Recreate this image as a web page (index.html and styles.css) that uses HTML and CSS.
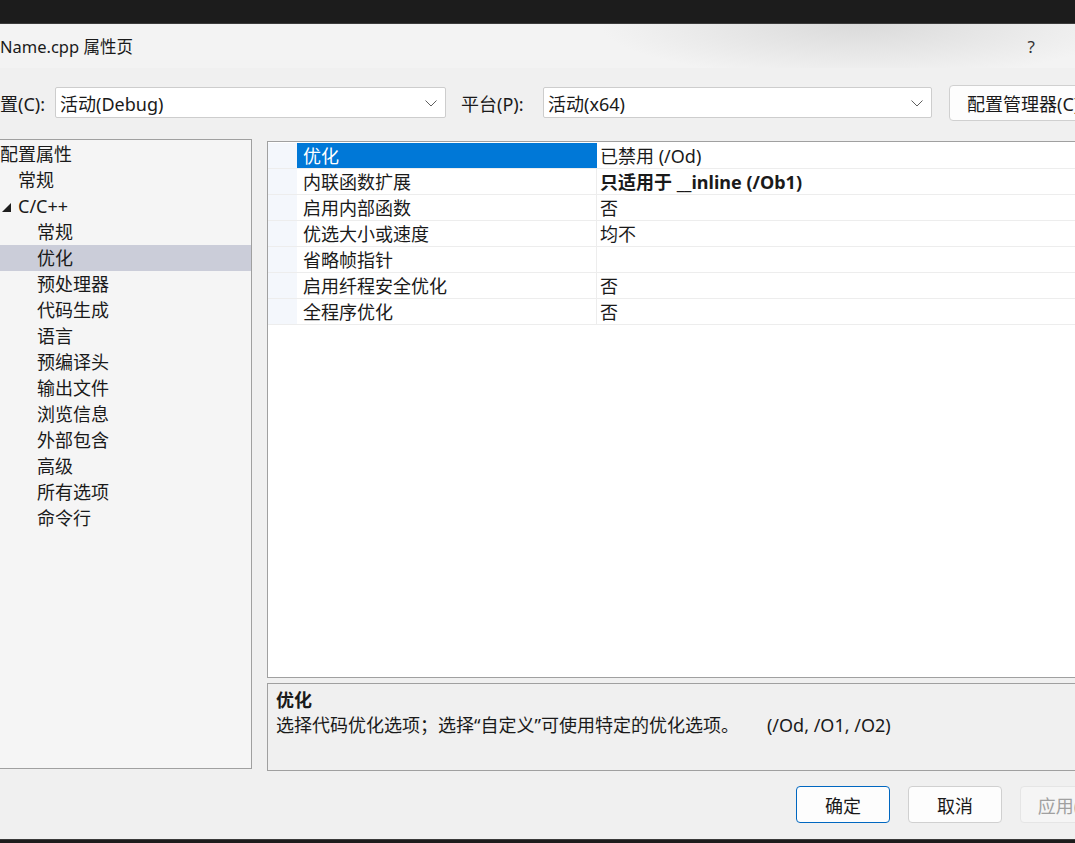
FILE: index.html
```html
<!DOCTYPE html>
<html lang="zh-CN">
<head>
    <meta charset="UTF-8">
    <meta name="viewport" content="width=device-width, initial-scale=1.0">
    <title>Name.cpp 属性页</title>
    <link rel="stylesheet" href="styles.css">
</head>
<body>
    <div class="topbar"></div>
    <div class="titlebar">
        <span class="title">Name.cpp 属性页</span>
        <span class="help">?</span>
    </div>
    <div class="config_row">
        <label class="cfg_label">置(C):</label>
        <div class="combo combo_cfg"><span>活动(Debug)</span>
            <svg class="chev" width="12" height="7" viewBox="0 0 12 7"><polyline points="0.5,0.5 6,6 11.5,0.5" fill="none" stroke="#5f5f5f" stroke-width="1"/></svg>
        </div>
        <label class="plat_label">平台(P):</label>
        <div class="combo combo_plat"><span>活动(x64)</span>
            <svg class="chev" width="12" height="7" viewBox="0 0 12 7"><polyline points="0.5,0.5 6,6 11.5,0.5" fill="none" stroke="#5f5f5f" stroke-width="1"/></svg>
        </div>
        <button class="btn btn_mgr">配置管理器(C)...</button>
    </div>
    <div class="main">
        <div class="tree">
            <div class="node lvl0">配置属性</div>
            <div class="node lvl1">常规</div>
            <div class="node lvl0 open"><svg class="tri" width="9" height="9" viewBox="0 0 9 9"><polygon points="0,9 9,9 9,0" fill="#1e1e1e"/></svg>C/C++</div>
            <div class="node lvl2">常规</div>
            <div class="node lvl2 selected">优化</div>
            <div class="node lvl2">预处理器</div>
            <div class="node lvl2">代码生成</div>
            <div class="node lvl2">语言</div>
            <div class="node lvl2">预编译头</div>
            <div class="node lvl2">输出文件</div>
            <div class="node lvl2">浏览信息</div>
            <div class="node lvl2">外部包含</div>
            <div class="node lvl2">高级</div>
            <div class="node lvl2">所有选项</div>
            <div class="node lvl2">命令行</div>
        </div>
        <div class="right_col">
            <div class="grid">
                <div class="rows">
                    <div class="row"><div class="name active">优化</div><div class="value">已禁用 (/Od)</div></div>
                    <div class="row"><div class="name">内联函数扩展</div><div class="value bold">只适用于 __inline (/Ob1)</div></div>
                    <div class="row"><div class="name">启用内部函数</div><div class="value">否</div></div>
                    <div class="row"><div class="name">优选大小或速度</div><div class="value">均不</div></div>
                    <div class="row"><div class="name">省略帧指针</div><div class="value"></div></div>
                    <div class="row"><div class="name">启用纤程安全优化</div><div class="value">否</div></div>
                    <div class="row"><div class="name">全程序优化</div><div class="value">否</div></div>
                </div>
            </div>
            <div class="desc">
                <div class="desc_title">优化</div>
                <div class="desc_text">选择代码优化选项；选择“自定义”可使用特定的优化选项。<span class="switches">(/Od, /O1, /O2)</span></div>
            </div>
        </div>
    </div>
    <div class="buttons">
        <button class="btn btn_ok">确定</button>
        <button class="btn">取消</button>
        <button class="btn btn_off">应用(A)</button>
    </div>
    <div class="bottombar"></div>
</body>
</html>
```

FILE: styles.css
```css
body {
    margin: 0;
    width: 1075px;
    height: 843px;
    overflow: hidden;
    background-color: #f0f0f0;
    color: #1a1a1a;
    font-family: "Noto Sans", "Noto Sans CJK SC", sans-serif;
    font-size: 18px;
    position: relative;
}
.topbar {
    height: 23px;
    background-color: #1c1c1c;
    border-bottom: 1px solid #3b3b3b;
}
.titlebar {
    height: 44px;
    display: flex;
    align-items: center;
    justify-content: space-between;
    background: radial-gradient(ellipse 260px 55px at 860px 0px, #dadada, rgba(243,243,243,0)), #f3f3f3;
}
.title {
    font-size: 16.5px;
    white-space: nowrap;
}
.help {
    margin-right: 40px;
    color: #333;
    font-size: 17px;
}
.config_row {
    display: flex;
    align-items: center;
    height: 37px;
    margin-top: 16px;
    white-space: nowrap;
}
.config_row > * {
    flex-shrink: 0;
}
.cfg_label {
    width: 55px;
}
.plat_label {
    width: 82px;
    margin-left: 15px;
}
.combo {
    height: 31px;
    border: 1px solid #cdcdcd;
    border-radius: 2px;
    background-color: #fff;
    display: flex;
    align-items: center;
    justify-content: space-between;
    padding-left: 4px;
    padding-right: 8px;
    box-sizing: border-box;
}
.combo_cfg { width: 391px; }
.combo_plat { width: 389px; }
.chev { margin-top: 1px; }
.btn {
    font-family: inherit;
    font-size: 18px;
    color: #1a1a1a;
    background-color: #fdfdfd;
    border: 1px solid #d0d0d0;
    border-radius: 4px;
    height: 37px;
    width: 94px;
    padding: 0;
    white-space: nowrap;
    flex-shrink: 0;
}
.btn_mgr {
    margin-left: 17px;
    width: 170px;
    height: 36px;
    text-align: left;
    padding-left: 17px;
}
.main {
    display: flex;
    margin-top: 18px;
    margin-left: -1px;
}
.tree {
    width: 251px;
    height: 627px;
    border: 1px solid #a0a0a0;
    background-color: #f5f5f5;
    padding-top: 1px;
    flex-shrink: 0;
}
.node {
    height: 26px;
    line-height: 26px;
    white-space: nowrap;
    display: flex;
    align-items: center;
}
.lvl0 { padding-left: 0; }
.lvl1 { padding-left: 18px; }
.lvl2 { padding-left: 37px; }
.open { padding-left: 2px; }
.tri {
    margin-right: 7px;
    margin-top: 2px;
}
.selected {
    background-color: #cbcdd9;
}
.right_col {
    margin-left: 15px;
    display: flex;
    flex-direction: column;
    width: 850px;
    flex-shrink: 0;
}
.grid {
    height: 534px;
    border: 1px solid #a0a0a0;
    border-right: none;
    background-color: #fff;
    margin-top: 2px;
    padding-top: 1px;
}
.rows {
    background: linear-gradient(to right, #f4f7fc 29px, transparent 29px);
}
.row {
    display: flex;
    height: 26px;
    line-height: 26px;
    border-bottom: 1px solid #ededed;
    box-sizing: border-box;
    white-space: nowrap;
}
.name {
    margin-left: 29px;
    width: 293px;
    padding-left: 6px;
    border-right: 1px solid #ededed;
    background-color: #fff;
}
.name.active {
    background-color: #0078d7;
    color: #fff;
    border-right-color: #0078d7;
}
.value {
    padding-left: 3px;
    flex: 1;
    background-color: #fff;
}
.bold { font-weight: bold; }
.desc {
    margin-top: 5px;
    height: 86px;
    border: 1px solid #a0a0a0;
    border-right: none;
    background-color: #f0f0f0;
    padding-left: 8px;
    white-space: nowrap;
}
.desc_title {
    font-weight: bold;
    margin-top: 4px;
    line-height: 24px;
}
.desc_text {
    line-height: 26px;
}
.switches {
    margin-left: 28px;
}
.buttons {
    display: flex;
    gap: 18px;
    margin-top: 15px;
    margin-left: 796px;
    white-space: nowrap;
}
.btn_ok {
    border-color: #0067c0;
}
.btn_off {
    color: #a0a0a0;
    background-color: #f5f5f5;
    border-color: #e5e5e5;
}
.bottombar {
    position: absolute;
    left: 0;
    bottom: 0;
    width: 100%;
    height: 3px;
    background-color: #1c1c1c;
    border-top: 1px solid #3b3b3b;
}
```
